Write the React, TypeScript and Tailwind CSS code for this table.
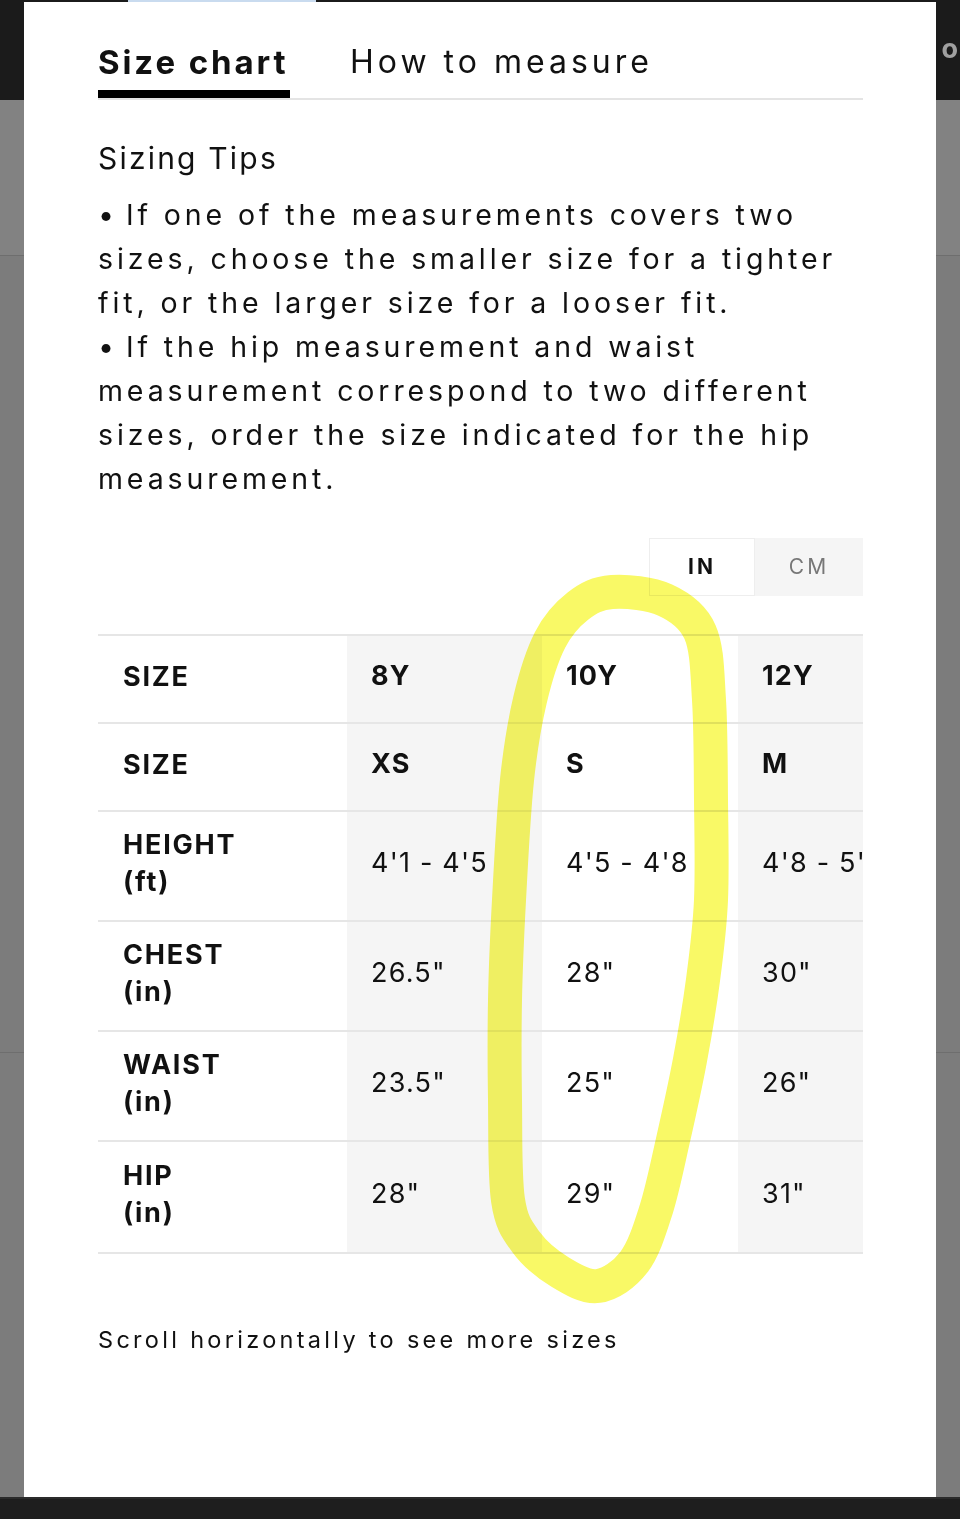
import React from "react";

type Row = { label: string[]; cells: string[]; bold?: boolean; tall?: boolean };

const rows: Row[] = [
  { label: ["SIZE"], cells: ["8Y", "10Y", "12Y"], bold: true },
  { label: ["SIZE"], cells: ["XS", "S", "M"], bold: true },
  { label: ["HEIGHT", "(ft)"], cells: ["4'1 - 4'5", "4'5 - 4'8", "4'8 - 5'"], tall: true },
  { label: ["CHEST", "(in)"], cells: ['26.5"', '28"', '30"'], tall: true },
  { label: ["WAIST", "(in)"], cells: ['23.5"', '25"', '26"'], tall: true },
  { label: ["HIP", "(in)"], cells: ['28"', '29"', '31"'], tall: true },
];

const tips = [
  "• If one of the measurements covers two",
  "sizes, choose the smaller size for a tighter",
  "fit, or the larger size for a looser fit.",
  "• If the hip measurement and waist",
  "measurement correspond to two different",
  "sizes, order the size indicated for the hip",
  "measurement.",
];

// hand drawn marker loop around the 10Y column
const loop: [number, number][] = [
  [612, 592], [665, 600], [700, 632], [709, 700], [711, 800], [711, 900],
  [703, 980], [690, 1060], [673, 1140], [656, 1210], [634, 1262],
  [598, 1286], [560, 1272], [526, 1242], [508, 1200], [505, 1100], [505, 1000],
  [509, 900], [517, 780], [530, 700], [550, 640], [578, 606],
];

function smoothPath(pts: [number, number][]) {
  const n = pts.length;
  let d = `M ${pts[0][0]} ${pts[0][1]}`;
  for (let i = 0; i < n; i++) {
    const p0 = pts[(i - 1 + n) % n];
    const p1 = pts[i];
    const p2 = pts[(i + 1) % n];
    const p3 = pts[(i + 2) % n];
    const c1x = p1[0] + (p2[0] - p0[0]) / 6;
    const c1y = p1[1] + (p2[1] - p0[1]) / 6;
    const c2x = p2[0] - (p3[0] - p1[0]) / 6;
    const c2y = p2[1] - (p3[1] - p1[1]) / 6;
    d += ` C ${c1x} ${c1y} ${c2x} ${c2y} ${p2[0]} ${p2[1]}`;
  }
  return d;
}

const SideStrip: React.FC<{ right?: boolean }> = ({ right }) => (
  <div className="w-[24px] flex flex-col">
    <div className="h-[100px] bg-[#1b1b1b] flex items-center justify-end overflow-hidden">
      {right && (
        <span className="text-[27px] font-bold text-[#a0a0a0] leading-none mr-[2px] mb-[4px] font-['Inter',sans-serif]">o</span>
      )}
    </div>
    <div className="h-[155px] bg-[#828282]" />
    <div className="h-px bg-[#6e6e6e]" />
    <div className="h-[796px] bg-[#7c7c7c]" />
    <div className="h-px bg-[#6e6e6e]" />
    <div className="flex-1 bg-[#7c7c7c]" />
  </div>
);

export default function App() {
  return (
    <div className="relative w-[960px] h-[1519px] bg-[#1e1e1e] flex flex-col overflow-hidden font-['Inter',sans-serif] text-[#111]">
      <div className="flex h-[1497px]">
        <SideStrip />
        <div className="w-[912px] flex flex-col">
          <div className="h-[2px] bg-[#1b1b1b] flex">
            <div className="ml-[104px] w-[188px] bg-[#c9dbef]" />
          </div>
          <div className="flex-1 bg-white pl-[74px] pr-[73px]">
            {/* tabs */}
            <div className="flex items-end gap-[60px] border-b-2 border-[#e4e4e4] pt-[40px]">
              <div className="border-b-8 border-black pb-[8px] w-[192px]">
                <div className="text-[33px] leading-[40px] font-bold tracking-[2.9px] whitespace-nowrap">Size chart</div>
              </div>
              <div className="pb-[16px]">
                <div className="text-[32px] leading-[40px] tracking-[4px] whitespace-nowrap">How to measure</div>
              </div>
            </div>

            {/* sizing tips */}
            <div className="mt-[38px] text-[30px] leading-[40px] tracking-[2.2px]">Sizing Tips</div>
            <div className="mt-[15px] text-[28.5px] leading-[44px] tracking-[3.9px]">
              {tips.map((t, i) => (
                <div key={i} className="whitespace-pre">
                  {t.startsWith("•") ? (
                    <>
                      <span className="mr-[8px]">•</span>
                      {t.slice(2)}
                    </>
                  ) : (
                    t
                  )}
                </div>
              ))}
            </div>

            {/* unit toggle */}
            <div className="mt-[37px] flex justify-end">
              <div className="flex h-[58px]">
                <div className="w-[106px] border border-[#eeeeee] bg-white flex items-center justify-center text-[21px] font-bold tracking-[3px]">IN</div>
                <div className="w-[108px] bg-[#f5f5f5] flex items-center justify-center text-[21px] text-[#777] tracking-[3px]">CM</div>
              </div>
            </div>

            {/* table */}
            <div className="mt-[38px] w-[765px] overflow-hidden">
              <div className="w-[835px]">
                {rows.map((r, i) => (
                  <div
                    key={i}
                    className={`grid grid-cols-[249px_195px_196px_195px] border-t-2 border-[#e6e6e6] ${r.tall ? "h-[110px]" : "h-[88px]"} ${i === rows.length - 1 ? "border-b-2 box-content" : ""}`}
                  >
                    <div className="pl-[25px] pb-[6px] flex flex-col justify-center text-[27px] font-bold leading-[37px] tracking-[1.8px]">
                      {r.label.map((l) => (
                        <div key={l}>{l}</div>
                      ))}
                    </div>
                    {r.cells.map((c, j) => (
                      <div
                        key={j}
                        className={`pl-[24px] pb-[6px] flex items-center whitespace-nowrap text-[27px] ${j === 1 ? "bg-white" : "bg-[#f5f5f5]"} ${r.bold ? "font-bold tracking-[1.2px]" : "tracking-[1.2px]"}`}
                      >
                        {c}
                      </div>
                    ))}
                  </div>
                ))}
              </div>
            </div>

            <div className="mt-[70px] text-[23.5px] leading-[32px] tracking-[3.3px]">Scroll horizontally to see more sizes</div>
          </div>
        </div>
        <SideStrip right />
      </div>
      <div className="h-[22px] bg-[#1e1e1e] border-t-2 border-[#2b2b2b]" />

      <svg className="absolute left-0 top-0 pointer-events-none mix-blend-multiply" width="960" height="1519" viewBox="0 0 960 1519">
        <path d={smoothPath(loop)} fill="none" stroke="#f9f966" strokeWidth="34" strokeLinecap="round" strokeLinejoin="round" />
      </svg>
    </div>
  );
}
